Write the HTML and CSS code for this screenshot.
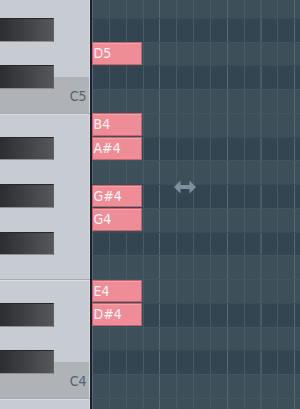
FILE: index.html
```html
<!DOCTYPE html>
<html lang="en">
<head>
    <meta charset="UTF-8">
    <meta name="viewport" content="width=device-width, initial-scale=1.0">
    <title>Piano Roll</title>
    <link rel="stylesheet" href="styles.css">
</head>
<body>
    <div class="screen">
        <div class="roll">
            <div class="row edge"><div class="key"></div><div class="lane"></div></div>
            <div class="row sharp"><div class="key"><div class="black"></div></div><div class="lane"></div></div>
            <div class="row"><div class="key"></div><div class="lane"><div class="note">D5</div></div></div>
            <div class="row sharp"><div class="key half"><div class="black"></div></div><div class="lane"></div></div>
            <div class="row"><div class="key c"><span class="label">C5</span></div><div class="lane"></div></div>
            <div class="row edge"><div class="key"></div><div class="lane"><div class="note">B4</div></div></div>
            <div class="row sharp"><div class="key"><div class="black"></div></div><div class="lane"><div class="note">A#4</div></div></div>
            <div class="row"><div class="key"></div><div class="lane"></div></div>
            <div class="row sharp"><div class="key"><div class="black"></div></div><div class="lane"><div class="note">G#4</div></div></div>
            <div class="row"><div class="key"></div><div class="lane"><div class="note">G4</div></div></div>
            <div class="row sharp"><div class="key"><div class="black"></div></div><div class="lane"></div></div>
            <div class="row"><div class="key"></div><div class="lane"></div></div>
            <div class="row edge"><div class="key"></div><div class="lane"><div class="note">E4</div></div></div>
            <div class="row sharp"><div class="key"><div class="black"></div></div><div class="lane"><div class="note">D#4</div></div></div>
            <div class="row"><div class="key"></div><div class="lane"></div></div>
            <div class="row sharp"><div class="key half"><div class="black"></div></div><div class="lane"></div></div>
            <div class="row"><div class="key c"><span class="label">C4</span></div><div class="lane"></div></div>
            <div class="row edge"><div class="key"></div><div class="lane"></div></div>
            <div class="row sharp"><div class="key"><div class="black"></div></div><div class="lane"></div></div>

            <!-- resize cursor over the grid -->
            <svg class="resize" width="22" height="14" viewBox="0 0 22 14">
                <polygon points="0,7 6.5,0.5 6.5,5 15.5,5 15.5,0.5 22,7 15.5,13.5 15.5,9 6.5,9 6.5,13.5" fill="#7c919e"/>
            </svg>
        </div>
    </div>
</body>
</html>
```

FILE: styles.css
```css
*{
    padding: 0;
    margin: 0;
    box-sizing: border-box;
}
body{
    background-color: #344552;
    font-family: "Liberation Sans Narrow", "DejaVu Sans Condensed", "Liberation Sans", sans-serif;
}
.screen{
    height: 409px;
    overflow: hidden;
}
.roll{
    position: relative;
    margin-top: -6px;
}
.row{
    display: flex;
    height: 23.77px;
}
/* keyboard column */
.key{
    width: 91.5px;
    flex: none;
    background: #c7ccd2;
    border-right: 2.5px solid #1b2227;
    box-shadow: inset -1px 0 0 #d6dade;
    display: flex;
    align-items: flex-start;
    justify-content: flex-end;
}
.key.c{
    background: #afb3b8;
}
.key.half{
    background: linear-gradient(to bottom, #c7ccd2 50%, #afb3b8 50%);
}
.edge .key{
    box-shadow: inset 0 1px 0 #a7acb1, inset 0 2px 0 #d9dde1, inset -1px 0 0 #d6dade;
}
.black{
    width: 53.5px;
    height: 100%;
    background: linear-gradient(to right, #2b2d30, #55575b);
    border-top: 1px solid #25272a;
    border-bottom: 1px solid #8e9296;
    border-right: 1px solid #5f6266;
    margin-right: auto;
}
.label{
    font-size: 14px;
    line-height: 14px;
    color: #59616a;
    padding-right: 3px;
}
/* note grid */
.lane{
    flex: 1;
    background-color: #3d4f59;
    background-image:
        repeating-linear-gradient(to right, #566b77 0 1px, transparent 1px 67.4px),
        repeating-linear-gradient(to right, #475a65 0 1px, transparent 1px 16.85px);
    box-shadow: inset 0 1px 0 #43555e;
}
.sharp .lane{
    background-color: #344552;
    box-shadow: inset 0 1px 0 #3a4c57;
}
.note{
    width: 50.5px;
    height: 22.5px;
    margin-top: 0.5px;
    background: #ee8d96;
    border: 1px solid #c8646e;
    box-shadow: inset 0 1px 0 #f4a3aa;
    color: #fff6f6;
    font-size: 14px;
    line-height: 20px;
    padding-left: 1px;
}
.resize{
    position: absolute;
    left: 174px;
    top: 185.5px;
}
```
